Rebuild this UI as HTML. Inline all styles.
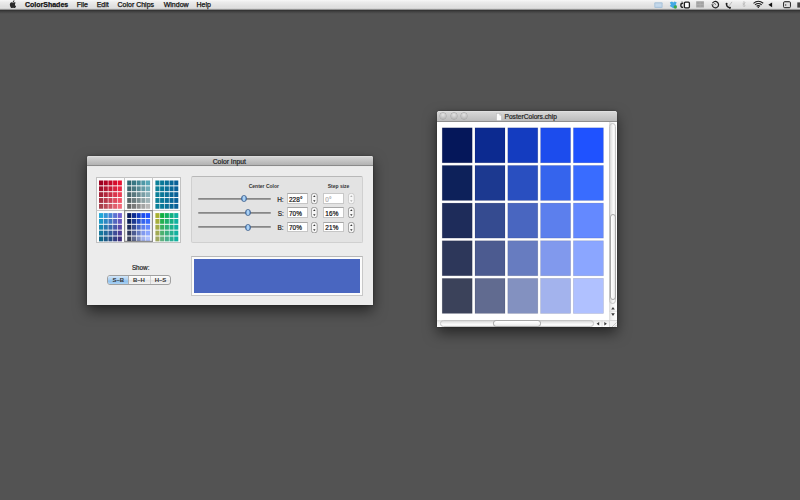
<!DOCTYPE html>
<html><head><meta charset="utf-8">
<style>
*{margin:0;padding:0;box-sizing:border-box}
html,body{width:800px;height:500px;overflow:hidden}
body{background:#535353;position:relative;font-family:"Liberation Sans",sans-serif;color:#222}
.abs{position:absolute}
#menubar{position:absolute;left:0;top:0;width:800px;height:10px;
 background:linear-gradient(#f7f7f7 0px,#ececec 2px,#dedede 7px,#e2e2e2 8px,#bdbdbd 9.3px,#2c2c2c 10px)}
#menushadow{position:absolute;left:0;top:10px;width:800px;height:4px;background:linear-gradient(#2c2c2c,#3c3c3c 1px,#4d4d4d 3px,#535353)}
.mi{position:absolute;top:1.2px;font-size:7px;line-height:8px;color:#111;white-space:nowrap;-webkit-text-stroke:0.25px #111}
.win{position:absolute}
#w1{left:87px;top:156px;width:286px;height:149px;background:#ececec;border-radius:2px 2px 0 0;
 box-shadow:0 6px 14px rgba(0,0,0,.55),0 0 2.5px rgba(0,0,0,.35)}
#w1 .tb{position:absolute;left:0;top:0;width:286px;height:11px;border-radius:2px 2px 0 0;
 background:linear-gradient(#e4e4e4 0px,#d4d4d4 1px,#b4b4b4 8.6px,#868686 9.6px,#f4f4f4 10.6px)}
.title{position:absolute;font-size:6.8px;line-height:8px;color:#222;white-space:nowrap;-webkit-text-stroke:0.2px #222}
#thumbs{position:absolute;left:9.2px;top:21.25px;width:85px;height:65.5px;background:#fbfbfb;border:1px solid #c2c2c2}
.tdiv{position:absolute;background:#c6c6c6}
#group{position:absolute;left:104.3px;top:20.2px;width:172px;height:67.2px;background:#e3e3e3;border:1px solid #d0d0d0;border-top-color:#b8b8b8;border-radius:2px}
.lbl{position:absolute;font-size:5px;line-height:6px;font-weight:bold;color:#333;white-space:nowrap}
.track{position:absolute;left:110.7px;width:73.5px;height:2px;border-radius:1px;background:linear-gradient(#7c7c7c,#a8a8a8);}
.hl{position:absolute;font-size:6.4px;line-height:7px;color:#222;white-space:nowrap;-webkit-text-stroke:0.2px #222}
.field{position:absolute;width:21px;height:10.5px;background:#fff;border:0.8px solid #c6c6c6;border-top:1.2px solid #a6a6a6}
.field span{position:absolute;left:1.1px;top:1.7px;font-size:6.4px;line-height:7px;letter-spacing:0.12px;color:#111;white-space:nowrap;-webkit-text-stroke:0.2px currentColor}
#seg{position:absolute;left:20.3px;top:118.5px;width:64.2px;height:10px;border:0.8px solid #a0a0a0;border-radius:3px;background:linear-gradient(#fcfcfc,#f0f0f0 50%,#e4e4e4 55%,#f2f2f2);overflow:hidden}
.segt{position:absolute;top:1.2px;font-size:6px;line-height:7px;font-weight:bold;color:#333;white-space:nowrap;letter-spacing:-0.15px}
#swframe{position:absolute;left:104.3px;top:100.1px;width:172px;height:39.5px;background:#fbfbfb;border:0.8px solid #c8c8c8;border-top-color:#b8b8b8}
#swatch{position:absolute;left:107px;top:102.8px;width:166.4px;height:34.2px;background:#4966c0}
#w2{left:437px;top:111px;width:180px;height:216px;background:#fff;border-radius:2.5px 2.5px 0 0;
 box-shadow:0 6px 14px rgba(0,0,0,.55),0 0 2.5px rgba(0,0,0,.35)}
#w2 .tb{position:absolute;left:0;top:0;width:180px;height:10.5px;border-radius:2.5px 2.5px 0 0;
 background:linear-gradient(#e8e8e8 0px,#d6d6d6 1px,#bdbdbd 9.5px,#8f8f8f 10.5px)}
.tl{position:absolute;top:2.2px;width:6.1px;height:6.3px;border-radius:50%;background:radial-gradient(circle at 50% 30%,#e4e4e4,#bcbcbc 70%,#a8a8a8);box-shadow:0 0 0 0.4px #9a9a9a}
#vs{position:absolute;left:172px;top:10.5px;width:8px;height:198px;background:linear-gradient(90deg,#dcdcdc,#f4f4f4 40%,#fff)}
#hs{position:absolute;left:0;top:208.5px;width:172px;height:7.5px;background:linear-gradient(#dcdcdc,#f4f4f4 40%,#fff)}
</style></head><body>
<div id="menubar"></div>
<div id="menushadow"></div>
<!-- apple -->
<svg class="abs" style="left:8.6px;top:0.2px" width="7.6" height="8.2" viewBox="0 -0.8 14 17.4"><path fill="#2a2a2a" d="M11.6 8.5c0-2 1.6-2.9 1.7-3-0.9-1.4-2.4-1.6-2.9-1.6-1.2-0.1-2.4 0.7-3 0.7-0.6 0-1.6-0.7-2.6-0.7C3.400 3.900 2.100 4.700 1.400 6c-1.500 2.600-0.400 6.400 1 8.500 0.700 1 1.500 2.100 2.600 2.100 1-0.100 1.400-0.700 2.700-0.700s1.600 0.700 2.700 0.600c1.100 0 1.800-1 2.500-2 0.800-1.100 1.100-2.200 1.100-2.300-0.100 0-2.300-0.900-2.400-3.500zM9.600 2.400c0.600-0.700 1-1.700 0.900-2.700-0.800 0-1.900 0.600-2.500 1.300-0.500 0.600-1 1.600-0.900 2.600 1 0.100 1.900-0.500 2.500-1.200z"/></svg>
<div class="mi" style="left:25px;font-weight:bold">ColorShades</div>
<div class="mi" style="left:76.7px">File</div>
<div class="mi" style="left:96.7px">Edit</div>
<div class="mi" style="left:117.5px">Color Chips</div>
<div class="mi" style="left:163.7px">Window</div>
<div class="mi" style="left:196.5px">Help</div>
<!-- status icons -->
<svg class="abs" style="left:650px;top:0" width="150" height="10" viewBox="0 0 150 10">
 <rect x="4.3" y="2.2" width="8.3" height="5.8" rx="1" fill="#a9c3da"/>
 <rect x="5.3" y="3.4" width="6.3" height="3.4" fill="#c4d8ea"/>
 <path d="M19.8 2.6 L22 1.6 L23.3 2.6 L24.6 1.6 L26.8 2.6 L25.7 4.4 L26.8 6 L23.3 8.2 L19.8 6 L20.9 4.4Z" fill="#43a9e6"/>
 <circle cx="25.3" cy="7" r="1.7" fill="#3aa64a"/>
 <path d="M33.2 3 Q30.8 3 30.8 5.2 Q30.8 7.4 33.2 7.4" stroke="#222" stroke-width="1.3" fill="none"/>
 <path d="M32 1 V2.6" stroke="#999" stroke-width="0.9"/>
 <rect x="34.4" y="2.2" width="5" height="5.6" rx="1" fill="#fff" stroke="#1e1e1e" stroke-width="1.3"/>
 <rect x="46.2" y="1.3" width="7.7" height="6.2" fill="#a3a3a3"/>
 <path d="M50.05 1.3 V7.5 M46.2 4.4 H53.9" stroke="#b8b8b8" stroke-width="0.5"/>
 <path d="M62.5 3.2 A3.2 3.2 0 1 1 62.5 6.1" stroke="#1e1e1e" stroke-width="1.2" fill="none"/>
 <path d="M61.2 4.4 L63.8 4.4 L62.5 6.3Z" fill="#1e1e1e"/>
 <path d="M65.6 4.7 L64.4 3" stroke="#333" stroke-width="0.8"/>
 <path d="M76.5 3.8 Q76.2 6.8 79.8 7.9" stroke="#1e1e1e" stroke-width="1.3" fill="none" stroke-linecap="round"/>
 <circle cx="76.6" cy="3.7" r="0.95" fill="#1e1e1e"/><circle cx="80" cy="7.8" r="0.95" fill="#1e1e1e"/>
 <path d="M78.8 6.2 L82 1.9" stroke="#a8a8a8" stroke-width="0.7"/>
 <path d="M92.6 3.4 L95.2 5.6 L93.9 6.9 V1.5 L95.2 2.8 L92.6 5" stroke="#b8b8b8" stroke-width="0.75" fill="none"/>
 <path d="M103.5 3.3 Q108.3 -0.7 113.2 3.3" stroke="#1a1a1a" stroke-width="1.1" fill="none"/>
 <path d="M105 4.9 Q108.3 2.2 111.7 4.9" stroke="#1a1a1a" stroke-width="1.1" fill="none"/>
 <path d="M106.6 6.3 Q108.3 5 110.1 6.3" stroke="#1a1a1a" stroke-width="1.1" fill="none"/>
 <circle cx="108.3" cy="7.3" r="0.75" fill="#1a1a1a"/>
 <path d="M122.1 2.4 L118.3 4.8 L122.1 7.3Z" fill="#111"/>
 <rect x="133.6" y="1.7" width="6.8" height="6" rx="1" fill="#cfcfcf" stroke="#1e1e1e" stroke-width="1"/>
 <rect x="134.3" y="3" width="5.4" height="4" fill="#e0e0e0"/>
 <circle cx="135.7" cy="5" r="0.7" fill="#333"/>
 <rect x="147.3" y="2.4" width="3" height="5.2" fill="#444"/>
</svg>
<!-- Window 1: Color Input -->
<div class="win" id="w1">
 <div class="tb"></div>
 <div class="title" style="left:125.7px;top:1.8px">Color Input</div>
 <div id="thumbs"></div>
 <div class="tdiv" style="left:37.2px;top:21.25px;width:1px;height:65.25px"></div>
 <div class="tdiv" style="left:65.4px;top:21.25px;width:1px;height:65.25px"></div>
 <div class="tdiv" style="left:9.2px;top:53.9px;width:84.5px;height:1px"></div>
<svg class="abs" style="left:0;top:0" width="286" height="149"><rect x="12.00" y="24.50" width="4.1" height="4.85" fill="#9c0020"/><rect x="16.70" y="24.50" width="4.1" height="4.85" fill="#af0424"/><rect x="21.40" y="24.50" width="4.1" height="4.85" fill="#c20828"/><rect x="26.10" y="24.50" width="4.1" height="4.85" fill="#d50c2c"/><rect x="30.80" y="24.50" width="4.1" height="4.85" fill="#e81030"/><rect x="12.00" y="30.35" width="4.1" height="4.85" fill="#9f102b"/><rect x="16.70" y="30.35" width="4.1" height="4.85" fill="#b21631"/><rect x="21.40" y="30.35" width="4.1" height="4.85" fill="#c51b36"/><rect x="26.10" y="30.35" width="4.1" height="4.85" fill="#d8203c"/><rect x="30.80" y="30.35" width="4.1" height="4.85" fill="#ea2642"/><rect x="12.00" y="36.20" width="4.1" height="4.85" fill="#a22036"/><rect x="16.70" y="36.20" width="4.1" height="4.85" fill="#b4273e"/><rect x="21.40" y="36.20" width="4.1" height="4.85" fill="#c82e45"/><rect x="26.10" y="36.20" width="4.1" height="4.85" fill="#da354c"/><rect x="30.80" y="36.20" width="4.1" height="4.85" fill="#ed3c54"/><rect x="12.00" y="42.05" width="4.1" height="4.85" fill="#a53041"/><rect x="16.70" y="42.05" width="4.1" height="4.85" fill="#b7384a"/><rect x="21.40" y="42.05" width="4.1" height="4.85" fill="#ca4154"/><rect x="26.10" y="42.05" width="4.1" height="4.85" fill="#dd4a5d"/><rect x="30.80" y="42.05" width="4.1" height="4.85" fill="#f05266"/><rect x="12.00" y="47.90" width="4.1" height="4.85" fill="#a8404c"/><rect x="16.70" y="47.90" width="4.1" height="4.85" fill="#ba4a57"/><rect x="21.40" y="47.90" width="4.1" height="4.85" fill="#cd5462"/><rect x="26.10" y="47.90" width="4.1" height="4.85" fill="#e05e6d"/><rect x="30.80" y="47.90" width="4.1" height="4.85" fill="#f26878"/><rect x="40.20" y="24.50" width="4.1" height="4.85" fill="#2e6670"/><rect x="44.90" y="24.50" width="4.1" height="4.85" fill="#387682"/><rect x="49.60" y="24.50" width="4.1" height="4.85" fill="#438794"/><rect x="54.30" y="24.50" width="4.1" height="4.85" fill="#4e98a6"/><rect x="59.00" y="24.50" width="4.1" height="4.85" fill="#58a8b8"/><rect x="40.20" y="30.35" width="4.1" height="4.85" fill="#3c666e"/><rect x="44.90" y="30.35" width="4.1" height="4.85" fill="#487780"/><rect x="49.60" y="30.35" width="4.1" height="4.85" fill="#568993"/><rect x="54.30" y="30.35" width="4.1" height="4.85" fill="#649ba6"/><rect x="59.00" y="30.35" width="4.1" height="4.85" fill="#70acb8"/><rect x="40.20" y="36.20" width="4.1" height="4.85" fill="#4a666b"/><rect x="44.90" y="36.20" width="4.1" height="4.85" fill="#59787e"/><rect x="49.60" y="36.20" width="4.1" height="4.85" fill="#698b92"/><rect x="54.30" y="36.20" width="4.1" height="4.85" fill="#799ea5"/><rect x="59.00" y="36.20" width="4.1" height="4.85" fill="#88b0b8"/><rect x="40.20" y="42.05" width="4.1" height="4.85" fill="#586668"/><rect x="44.90" y="42.05" width="4.1" height="4.85" fill="#6a797c"/><rect x="49.60" y="42.05" width="4.1" height="4.85" fill="#7c8d90"/><rect x="54.30" y="42.05" width="4.1" height="4.85" fill="#8ea1a4"/><rect x="59.00" y="42.05" width="4.1" height="4.85" fill="#a0b4b8"/><rect x="40.20" y="47.90" width="4.1" height="4.85" fill="#666666"/><rect x="44.90" y="47.90" width="4.1" height="4.85" fill="#7a7a7a"/><rect x="49.60" y="47.90" width="4.1" height="4.85" fill="#8f8f8f"/><rect x="54.30" y="47.90" width="4.1" height="4.85" fill="#a4a4a4"/><rect x="59.00" y="47.90" width="4.1" height="4.85" fill="#b8b8b8"/><rect x="68.40" y="24.50" width="4.1" height="4.85" fill="#0a8098"/><rect x="73.10" y="24.50" width="4.1" height="4.85" fill="#0a7898"/><rect x="77.80" y="24.50" width="4.1" height="4.85" fill="#0a7098"/><rect x="82.50" y="24.50" width="4.1" height="4.85" fill="#0a6898"/><rect x="87.20" y="24.50" width="4.1" height="4.85" fill="#0a6098"/><rect x="68.40" y="30.35" width="4.1" height="4.85" fill="#0a8098"/><rect x="73.10" y="30.35" width="4.1" height="4.85" fill="#0a7898"/><rect x="77.80" y="30.35" width="4.1" height="4.85" fill="#0a7098"/><rect x="82.50" y="30.35" width="4.1" height="4.85" fill="#0a6898"/><rect x="87.20" y="30.35" width="4.1" height="4.85" fill="#0a6098"/><rect x="68.40" y="36.20" width="4.1" height="4.85" fill="#0a8098"/><rect x="73.10" y="36.20" width="4.1" height="4.85" fill="#0a7898"/><rect x="77.80" y="36.20" width="4.1" height="4.85" fill="#0a7098"/><rect x="82.50" y="36.20" width="4.1" height="4.85" fill="#0a6898"/><rect x="87.20" y="36.20" width="4.1" height="4.85" fill="#0a6098"/><rect x="68.40" y="42.05" width="4.1" height="4.85" fill="#0a8098"/><rect x="73.10" y="42.05" width="4.1" height="4.85" fill="#0a7898"/><rect x="77.80" y="42.05" width="4.1" height="4.85" fill="#0a7098"/><rect x="82.50" y="42.05" width="4.1" height="4.85" fill="#0a6898"/><rect x="87.20" y="42.05" width="4.1" height="4.85" fill="#0a6098"/><rect x="68.40" y="47.90" width="4.1" height="4.85" fill="#0a8098"/><rect x="73.10" y="47.90" width="4.1" height="4.85" fill="#0a7898"/><rect x="77.80" y="47.90" width="4.1" height="4.85" fill="#0a7098"/><rect x="82.50" y="47.90" width="4.1" height="4.85" fill="#0a6898"/><rect x="87.20" y="47.90" width="4.1" height="4.85" fill="#0a6098"/><rect x="12.00" y="57.10" width="4.1" height="4.85" fill="#20a8d8"/><rect x="16.70" y="57.10" width="4.1" height="4.85" fill="#3496d6"/><rect x="21.40" y="57.10" width="4.1" height="4.85" fill="#4884d4"/><rect x="26.10" y="57.10" width="4.1" height="4.85" fill="#5c72d2"/><rect x="30.80" y="57.10" width="4.1" height="4.85" fill="#7060d0"/><rect x="12.00" y="62.95" width="4.1" height="4.85" fill="#1c98c4"/><rect x="16.70" y="62.95" width="4.1" height="4.85" fill="#2e87c2"/><rect x="21.40" y="62.95" width="4.1" height="4.85" fill="#4076c0"/><rect x="26.10" y="62.95" width="4.1" height="4.85" fill="#5265be"/><rect x="30.80" y="62.95" width="4.1" height="4.85" fill="#6454bc"/><rect x="12.00" y="68.80" width="4.1" height="4.85" fill="#1888b0"/><rect x="16.70" y="68.80" width="4.1" height="4.85" fill="#2878ae"/><rect x="21.40" y="68.80" width="4.1" height="4.85" fill="#3868ac"/><rect x="26.10" y="68.80" width="4.1" height="4.85" fill="#4858aa"/><rect x="30.80" y="68.80" width="4.1" height="4.85" fill="#5848a8"/><rect x="12.00" y="74.65" width="4.1" height="4.85" fill="#14789c"/><rect x="16.70" y="74.65" width="4.1" height="4.85" fill="#22699a"/><rect x="21.40" y="74.65" width="4.1" height="4.85" fill="#305a98"/><rect x="26.10" y="74.65" width="4.1" height="4.85" fill="#3e4b96"/><rect x="30.80" y="74.65" width="4.1" height="4.85" fill="#4c3c94"/><rect x="12.00" y="80.50" width="4.1" height="4.85" fill="#106888"/><rect x="16.70" y="80.50" width="4.1" height="4.85" fill="#1c5a86"/><rect x="21.40" y="80.50" width="4.1" height="4.85" fill="#284c84"/><rect x="26.10" y="80.50" width="4.1" height="4.85" fill="#343e82"/><rect x="30.80" y="80.50" width="4.1" height="4.85" fill="#403080"/><rect x="40.20" y="57.10" width="4.1" height="4.85" fill="#05175a"/><rect x="44.90" y="57.10" width="4.1" height="4.85" fill="#0c2a90"/><rect x="49.60" y="57.10" width="4.1" height="4.85" fill="#143cc0"/><rect x="54.30" y="57.10" width="4.1" height="4.85" fill="#1c4ced"/><rect x="59.00" y="57.10" width="4.1" height="4.85" fill="#1f52ff"/><rect x="40.20" y="62.95" width="4.1" height="4.85" fill="#0d215a"/><rect x="44.90" y="62.95" width="4.1" height="4.85" fill="#1c3990"/><rect x="49.60" y="62.95" width="4.1" height="4.85" fill="#294fc0"/><rect x="54.30" y="62.95" width="4.1" height="4.85" fill="#3564ed"/><rect x="59.00" y="62.95" width="4.1" height="4.85" fill="#396cff"/><rect x="40.20" y="68.80" width="4.1" height="4.85" fill="#1e2c5a"/><rect x="44.90" y="68.80" width="4.1" height="4.85" fill="#354b90"/><rect x="49.60" y="68.80" width="4.1" height="4.85" fill="#4966c0"/><rect x="54.30" y="68.80" width="4.1" height="4.85" fill="#5c7fed"/><rect x="59.00" y="68.80" width="4.1" height="4.85" fill="#6489ff"/><rect x="40.20" y="74.65" width="4.1" height="4.85" fill="#2d375a"/><rect x="44.90" y="74.65" width="4.1" height="4.85" fill="#4c5b90"/><rect x="49.60" y="74.65" width="4.1" height="4.85" fill="#677cc0"/><rect x="54.30" y="74.65" width="4.1" height="4.85" fill="#8199ed"/><rect x="59.00" y="74.65" width="4.1" height="4.85" fill="#8ba6ff"/><rect x="40.20" y="80.50" width="4.1" height="4.85" fill="#3b425a"/><rect x="44.90" y="80.50" width="4.1" height="4.85" fill="#616b90"/><rect x="49.60" y="80.50" width="4.1" height="4.85" fill="#8391c0"/><rect x="54.30" y="80.50" width="4.1" height="4.85" fill="#a3b3ed"/><rect x="59.00" y="80.50" width="4.1" height="4.85" fill="#b0c1ff"/><rect x="68.40" y="57.10" width="4.1" height="4.85" fill="#a8b030"/><rect x="73.10" y="57.10" width="4.1" height="4.85" fill="#10b040"/><rect x="77.80" y="57.10" width="4.1" height="4.85" fill="#10b060"/><rect x="82.50" y="57.10" width="4.1" height="4.85" fill="#10b080"/><rect x="87.20" y="57.10" width="4.1" height="4.85" fill="#10b0a0"/><rect x="68.40" y="62.95" width="4.1" height="4.85" fill="#a6ae3c"/><rect x="73.10" y="62.95" width="4.1" height="4.85" fill="#24b050"/><rect x="77.80" y="62.95" width="4.1" height="4.85" fill="#1db06b"/><rect x="82.50" y="62.95" width="4.1" height="4.85" fill="#17b085"/><rect x="87.20" y="62.95" width="4.1" height="4.85" fill="#10b0a0"/><rect x="68.40" y="68.80" width="4.1" height="4.85" fill="#a4ac48"/><rect x="73.10" y="68.80" width="4.1" height="4.85" fill="#38b060"/><rect x="77.80" y="68.80" width="4.1" height="4.85" fill="#2ab076"/><rect x="82.50" y="68.80" width="4.1" height="4.85" fill="#1eb08a"/><rect x="87.20" y="68.80" width="4.1" height="4.85" fill="#10b0a0"/><rect x="68.40" y="74.65" width="4.1" height="4.85" fill="#a2aa54"/><rect x="73.10" y="74.65" width="4.1" height="4.85" fill="#4cb070"/><rect x="77.80" y="74.65" width="4.1" height="4.85" fill="#38b080"/><rect x="82.50" y="74.65" width="4.1" height="4.85" fill="#24b090"/><rect x="87.20" y="74.65" width="4.1" height="4.85" fill="#10b0a0"/><rect x="68.40" y="80.50" width="4.1" height="4.85" fill="#a0a860"/><rect x="73.10" y="80.50" width="4.1" height="4.85" fill="#60b080"/><rect x="77.80" y="80.50" width="4.1" height="4.85" fill="#45b08b"/><rect x="82.50" y="80.50" width="4.1" height="4.85" fill="#2bb095"/><rect x="87.20" y="80.50" width="4.1" height="4.85" fill="#10b0a0"/></svg>
 <div class="abs" style="left:37.2px;top:53.9px;width:29.2px;height:32.6px;border:1px solid #8e8e8e;box-shadow:inset 0 0 1.5px rgba(0,0,0,.5)"></div>
 <div id="group"></div>
 <div class="lbl" style="left:161.7px;top:27.3px">Center Color</div>
 <div class="lbl" style="left:240.7px;top:27.3px">Step size</div>
 <div class="track" style="top:41.6px"></div>
 <div class="track" style="top:55.8px"></div>
 <div class="track" style="top:69.9px"></div>
 <svg class="abs" style="left:152.60px;top:38.10px" width="8" height="9" viewBox="0 0 8 9"><defs><linearGradient id="kg0" x1="0" x2="1" y1="0" y2="0"><stop offset="0" stop-color="#4a80c2"/><stop offset="0.45" stop-color="#b8dcfa"/><stop offset="0.55" stop-color="#b8dcfa"/><stop offset="1" stop-color="#4a80c2"/></linearGradient></defs><ellipse cx="4" cy="4.5" rx="2.5" ry="3.05" fill="url(#kg0)" stroke="#3f5f8c" stroke-width="0.8"/></svg>
 <svg class="abs" style="left:157.00px;top:52.10px" width="8" height="9" viewBox="0 0 8 9"><defs><linearGradient id="kg1" x1="0" x2="1" y1="0" y2="0"><stop offset="0" stop-color="#4a80c2"/><stop offset="0.45" stop-color="#b8dcfa"/><stop offset="0.55" stop-color="#b8dcfa"/><stop offset="1" stop-color="#4a80c2"/></linearGradient></defs><ellipse cx="4" cy="4.5" rx="2.5" ry="3.05" fill="url(#kg1)" stroke="#3f5f8c" stroke-width="0.8"/></svg>
 <svg class="abs" style="left:157.00px;top:66.50px" width="8" height="9" viewBox="0 0 8 9"><defs><linearGradient id="kg2" x1="0" x2="1" y1="0" y2="0"><stop offset="0" stop-color="#4a80c2"/><stop offset="0.45" stop-color="#b8dcfa"/><stop offset="0.55" stop-color="#b8dcfa"/><stop offset="1" stop-color="#4a80c2"/></linearGradient></defs><ellipse cx="4" cy="4.5" rx="2.5" ry="3.05" fill="url(#kg2)" stroke="#3f5f8c" stroke-width="0.8"/></svg>
 <div class="hl" style="left:190.2px;top:39.6px">H:</div>
 <div class="hl" style="left:190.7px;top:53.6px">S:</div>
 <div class="hl" style="left:190.5px;top:67.6px">B:</div>
 <div class="field" style="left:199.8px;top:37px"><span>228°</span></div>
 <div class="field" style="left:199.8px;top:51.2px"><span>70%</span></div>
 <div class="field" style="left:199.8px;top:65.5px"><span>70%</span></div>
 <svg class="abs" style="left:224.2px;top:37.0px" width="6.6" height="11.2" viewBox="0 0 6.6 11.2"><rect x="0.4" y="0.4" width="5.8" height="10.4" rx="2.4" fill="#f6f6f6" stroke="#8a8a8a" stroke-width="0.8"/><path d="M2.1 3.9 L3.3 2.3 L4.5 3.9Z" fill="#333"/><path d="M2.1 7.3 L3.3 8.9 L4.5 7.3Z" fill="#333"/></svg>
 <svg class="abs" style="left:224.2px;top:51.2px" width="6.6" height="11.2" viewBox="0 0 6.6 11.2"><rect x="0.4" y="0.4" width="5.8" height="10.4" rx="2.4" fill="#f6f6f6" stroke="#8a8a8a" stroke-width="0.8"/><path d="M2.1 3.9 L3.3 2.3 L4.5 3.9Z" fill="#333"/><path d="M2.1 7.3 L3.3 8.9 L4.5 7.3Z" fill="#333"/></svg>
 <svg class="abs" style="left:224.2px;top:65.5px" width="6.6" height="11.2" viewBox="0 0 6.6 11.2"><rect x="0.4" y="0.4" width="5.8" height="10.4" rx="2.4" fill="#f6f6f6" stroke="#8a8a8a" stroke-width="0.8"/><path d="M2.1 3.9 L3.3 2.3 L4.5 3.9Z" fill="#333"/><path d="M2.1 7.3 L3.3 8.9 L4.5 7.3Z" fill="#333"/></svg>
 <div class="field" style="left:236.2px;top:37px;border-color:#c8c8c8"><span style="color:#b0b0b0">0°</span></div>
 <div class="field" style="left:236.2px;top:51.2px"><span>16%</span></div>
 <div class="field" style="left:236.2px;top:65.5px"><span>21%</span></div>
 <svg class="abs" style="left:261.0px;top:37.0px" width="6.6" height="11.2" viewBox="0 0 6.6 11.2"><rect x="0.4" y="0.4" width="5.8" height="10.4" rx="2.4" fill="#f6f6f6" stroke="#c4c4c4" stroke-width="0.8"/><path d="M2.1 3.9 L3.3 2.3 L4.5 3.9Z" fill="#b0b0b0"/><path d="M2.1 7.3 L3.3 8.9 L4.5 7.3Z" fill="#b0b0b0"/></svg>
 <svg class="abs" style="left:261.0px;top:51.2px" width="6.6" height="11.2" viewBox="0 0 6.6 11.2"><rect x="0.4" y="0.4" width="5.8" height="10.4" rx="2.4" fill="#f6f6f6" stroke="#8a8a8a" stroke-width="0.8"/><path d="M2.1 3.9 L3.3 2.3 L4.5 3.9Z" fill="#333"/><path d="M2.1 7.3 L3.3 8.9 L4.5 7.3Z" fill="#333"/></svg>
 <svg class="abs" style="left:261.0px;top:65.5px" width="6.6" height="11.2" viewBox="0 0 6.6 11.2"><rect x="0.4" y="0.4" width="5.8" height="10.4" rx="2.4" fill="#f6f6f6" stroke="#8a8a8a" stroke-width="0.8"/><path d="M2.1 3.9 L3.3 2.3 L4.5 3.9Z" fill="#333"/><path d="M2.1 7.3 L3.3 8.9 L4.5 7.3Z" fill="#333"/></svg>
 <div class="hl" style="left:44.9px;top:107.8px;font-size:6.3px">Show:</div>
 <div id="seg">
  <div class="abs" style="left:0;top:0;width:20px;height:9px;background:linear-gradient(#d2e6f8,#a9cff2 45%,#8ec0ec 55%,#b4d8f6)"></div>
  <div class="abs" style="left:20px;top:0;width:0.6px;height:9px;background:#b0b0b0"></div>
  <div class="abs" style="left:41.6px;top:0;width:0.6px;height:9px;background:#d0d0d0"></div>
  <div class="segt" style="left:4.3px">S–B</div>
  <div class="segt" style="left:24.8px">B–H</div>
  <div class="segt" style="left:46.5px">H–S</div>
 </div>
 <div id="swframe"></div>
 <div id="swatch"></div>
</div>

<!-- Window 2: PosterColors.chip -->
<div class="win" id="w2">
 <div class="tb"></div>
 <div class="tl" style="left:3.3px"></div>
 <div class="tl" style="left:13.5px"></div>
 <div class="tl" style="left:23.6px"></div>
 <svg class="abs" style="left:58.5px;top:2px" width="6" height="8" viewBox="0 0 6 8"><path d="M0.3 0.3 H3.8 L5.7 2.2 V7.7 H0.3Z" fill="#fbfbfb" stroke="#9a9a9a" stroke-width="0.5"/><path d="M3.8 0.3 V2.2 H5.7" fill="#ddd" stroke="#9a9a9a" stroke-width="0.4"/></svg>
 <div class="title" style="left:67.5px;top:1.7px;font-size:6.65px">PosterColors.chip</div>
<svg class="abs" style="left:0;top:0" width="180" height="216"><rect x="5.20" y="16.80" width="30" height="35" fill="#05175a" stroke="rgba(0,0,30,.16)" stroke-width="0.7"/><rect x="38.00" y="16.80" width="30" height="35" fill="#0c2a90" stroke="rgba(0,0,30,.16)" stroke-width="0.7"/><rect x="70.80" y="16.80" width="30" height="35" fill="#143cc0" stroke="rgba(0,0,30,.16)" stroke-width="0.7"/><rect x="103.60" y="16.80" width="30" height="35" fill="#1c4ced" stroke="rgba(0,0,30,.16)" stroke-width="0.7"/><rect x="136.40" y="16.80" width="30" height="35" fill="#1f52ff" stroke="rgba(0,0,30,.16)" stroke-width="0.7"/><rect x="5.20" y="54.45" width="30" height="35" fill="#0d215a" stroke="rgba(0,0,30,.16)" stroke-width="0.7"/><rect x="38.00" y="54.45" width="30" height="35" fill="#1c3990" stroke="rgba(0,0,30,.16)" stroke-width="0.7"/><rect x="70.80" y="54.45" width="30" height="35" fill="#294fc0" stroke="rgba(0,0,30,.16)" stroke-width="0.7"/><rect x="103.60" y="54.45" width="30" height="35" fill="#3564ed" stroke="rgba(0,0,30,.16)" stroke-width="0.7"/><rect x="136.40" y="54.45" width="30" height="35" fill="#396cff" stroke="rgba(0,0,30,.16)" stroke-width="0.7"/><rect x="5.20" y="92.10" width="30" height="35" fill="#1e2c5a" stroke="rgba(0,0,30,.16)" stroke-width="0.7"/><rect x="38.00" y="92.10" width="30" height="35" fill="#354b90" stroke="rgba(0,0,30,.16)" stroke-width="0.7"/><rect x="70.80" y="92.10" width="30" height="35" fill="#4966c0" stroke="rgba(0,0,30,.16)" stroke-width="0.7"/><rect x="103.60" y="92.10" width="30" height="35" fill="#5c7fed" stroke="rgba(0,0,30,.16)" stroke-width="0.7"/><rect x="136.40" y="92.10" width="30" height="35" fill="#6489ff" stroke="rgba(0,0,30,.16)" stroke-width="0.7"/><rect x="5.20" y="129.75" width="30" height="35" fill="#2d375a" stroke="rgba(0,0,30,.16)" stroke-width="0.7"/><rect x="38.00" y="129.75" width="30" height="35" fill="#4c5b90" stroke="rgba(0,0,30,.16)" stroke-width="0.7"/><rect x="70.80" y="129.75" width="30" height="35" fill="#677cc0" stroke="rgba(0,0,30,.16)" stroke-width="0.7"/><rect x="103.60" y="129.75" width="30" height="35" fill="#8199ed" stroke="rgba(0,0,30,.16)" stroke-width="0.7"/><rect x="136.40" y="129.75" width="30" height="35" fill="#8ba6ff" stroke="rgba(0,0,30,.16)" stroke-width="0.7"/><rect x="5.20" y="167.40" width="30" height="35" fill="#3b425a" stroke="rgba(0,0,30,.16)" stroke-width="0.7"/><rect x="38.00" y="167.40" width="30" height="35" fill="#616b90" stroke="rgba(0,0,30,.16)" stroke-width="0.7"/><rect x="70.80" y="167.40" width="30" height="35" fill="#8391c0" stroke="rgba(0,0,30,.16)" stroke-width="0.7"/><rect x="103.60" y="167.40" width="30" height="35" fill="#a3b3ed" stroke="rgba(0,0,30,.16)" stroke-width="0.7"/><rect x="136.40" y="167.40" width="30" height="35" fill="#b0c1ff" stroke="rgba(0,0,30,.16)" stroke-width="0.7"/></svg>
 <div id="vs"></div>
 <div class="abs" style="left:172.3px;top:12.3px;width:7px;height:180.5px;border-radius:3.5px;background:linear-gradient(90deg,#d6d6d6,#ececec 35%,#fafafa 70%,#f0f0f0);border:0.6px solid #c4c4c4"></div>
 <div class="abs" style="left:172.6px;top:102.8px;width:6.4px;height:86.5px;border-radius:3.2px;background:linear-gradient(90deg,#ffffff,#f6f6f6 60%,#e4e4e4);border:0.7px solid #a8a8a8"></div>
 <svg class="abs" style="left:172px;top:193px" width="8" height="15" viewBox="0 0 8 15"><path d="M0 7.2 H8" stroke="#d4d4d4" stroke-width="0.6"/><path d="M2.2 5.6 L4 2.9 L5.8 5.6Z" fill="#3a3a3a"/><path d="M2.2 9.2 L4 11.9 L5.8 9.2Z" fill="#3a3a3a"/></svg>
 <div id="hs"></div>
 <div class="abs" style="left:2.5px;top:209.2px;width:154.3px;height:6.6px;border-radius:3.3px;background:linear-gradient(#d6d6d6,#ececec 35%,#fafafa 70%,#f0f0f0);border:0.6px solid #c4c4c4"></div>
 <div class="abs" style="left:56px;top:209.4px;width:48.3px;height:6.2px;border-radius:3.1px;background:linear-gradient(#ffffff,#f6f6f6 60%,#e4e4e4);border:0.7px solid #a8a8a8"></div>
 <svg class="abs" style="left:157px;top:208.5px" width="15" height="7.5" viewBox="0 0 15 7.5"><path d="M8 0 V7.5" stroke="#d4d4d4" stroke-width="0.6"/><path d="M5.2 2 L2.6 3.8 L5.2 5.6Z" fill="#3a3a3a"/><path d="M10.3 2 L12.9 3.8 L10.3 5.6Z" fill="#3a3a3a"/></svg>
 <div class="abs" style="left:172px;top:208.5px;width:8px;height:7.5px;background:#f2f2f2;border-left:0.5px solid #d8d8d8;border-top:0.5px solid #d8d8d8"></div>
 <svg class="abs" style="left:172px;top:208.5px" width="8" height="7.5" viewBox="0 0 8 7.5"><path d="M7.5 2.5 L2.5 7.5 M7.5 5 L5 7.5" stroke="#a0a0a0" stroke-width="0.5"/></svg>
</div>
</body></html>
